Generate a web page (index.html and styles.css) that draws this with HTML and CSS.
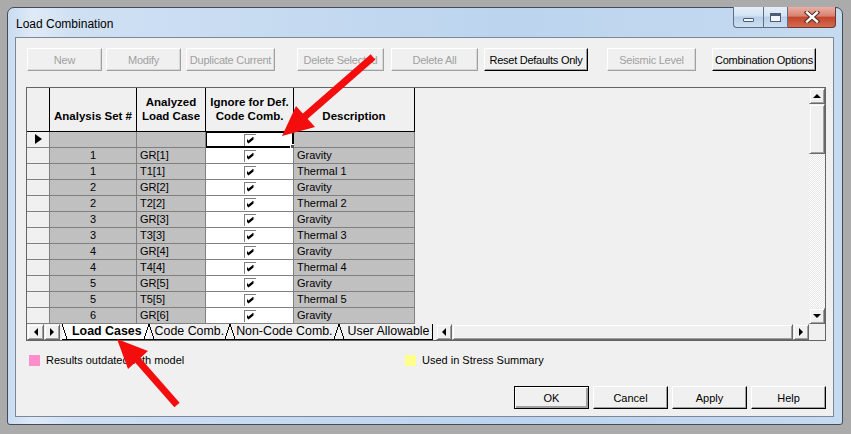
FILE: index.html
```html
<!DOCTYPE html>
<html lang="en">
<head>
    <meta charset="UTF-8">
    <title>Load Combination</title>
    <link rel="stylesheet" href="styles.css">
</head>
<body>
    <div class="window">
        <div class="titlebar">
            <span class="title">Load Combination</span>
            <div class="caps">
                <span class="cap cap-min"><i></i></span>
                <span class="cap cap-max"><i></i></span>
                <span class="cap cap-close">
                    <svg width="16" height="12" viewBox="0 0 16 12">
                        <path d="M3 1.5 L13 10.5 M13 1.5 L3 10.5" stroke="#4a2b26" stroke-width="4.4" stroke-linecap="square"/>
                        <path d="M3 1.5 L13 10.5 M13 1.5 L3 10.5" stroke="#fff" stroke-width="2.4" stroke-linecap="square"/>
                    </svg>
                </span>
            </div>
        </div>

        <div class="client">
            <div class="toolbar">
                <button class="btn b-new" disabled>New</button>
                <button class="btn b-modify" disabled>Modify</button>
                <button class="btn b-dup" disabled>Duplicate Current</button>
                <button class="btn b-delsel" disabled>Delete Selected</button>
                <button class="btn b-delall" disabled>Delete All</button>
                <button class="btn b-reset">Reset Defaults Only</button>
                <button class="btn b-seismic" disabled>Seismic Level</button>
                <button class="btn b-combo">Combination Options</button>
            </div>

            <div class="grid">
                <div class="grid-main">
                    <div class="sheet">
                        <div class="row head">
                            <div class="cell c0"></div>
                            <div class="cell c1">Analysis Set #</div>
                            <div class="cell c2">Analyzed<br>Load Case</div>
                            <div class="cell c3">Ignore for Def.<br>Code Comb.</div>
                            <div class="cell c4">Description</div>
                        </div>
                        <div class="row">
                            <div class="cell c0"><span class="cur"></span></div>
                            <div class="cell c1"></div>
                            <div class="cell c2"></div>
                            <div class="cell c3 focus"><span class="chk"></span></div>
                            <div class="cell c4"></div>
                        </div>
                        <div class="row">
                            <div class="cell c0"></div>
                            <div class="cell c1">1</div>
                            <div class="cell c2">GR[1]</div>
                            <div class="cell c3"><span class="chk"></span></div>
                            <div class="cell c4">Gravity</div>
                        </div>
                        <div class="row">
                            <div class="cell c0"></div>
                            <div class="cell c1">1</div>
                            <div class="cell c2">T1[1]</div>
                            <div class="cell c3"><span class="chk"></span></div>
                            <div class="cell c4">Thermal 1</div>
                        </div>
                        <div class="row">
                            <div class="cell c0"></div>
                            <div class="cell c1">2</div>
                            <div class="cell c2">GR[2]</div>
                            <div class="cell c3"><span class="chk"></span></div>
                            <div class="cell c4">Gravity</div>
                        </div>
                        <div class="row">
                            <div class="cell c0"></div>
                            <div class="cell c1">2</div>
                            <div class="cell c2">T2[2]</div>
                            <div class="cell c3"><span class="chk"></span></div>
                            <div class="cell c4">Thermal 2</div>
                        </div>
                        <div class="row">
                            <div class="cell c0"></div>
                            <div class="cell c1">3</div>
                            <div class="cell c2">GR[3]</div>
                            <div class="cell c3"><span class="chk"></span></div>
                            <div class="cell c4">Gravity</div>
                        </div>
                        <div class="row">
                            <div class="cell c0"></div>
                            <div class="cell c1">3</div>
                            <div class="cell c2">T3[3]</div>
                            <div class="cell c3"><span class="chk"></span></div>
                            <div class="cell c4">Thermal 3</div>
                        </div>
                        <div class="row">
                            <div class="cell c0"></div>
                            <div class="cell c1">4</div>
                            <div class="cell c2">GR[4]</div>
                            <div class="cell c3"><span class="chk"></span></div>
                            <div class="cell c4">Gravity</div>
                        </div>
                        <div class="row">
                            <div class="cell c0"></div>
                            <div class="cell c1">4</div>
                            <div class="cell c2">T4[4]</div>
                            <div class="cell c3"><span class="chk"></span></div>
                            <div class="cell c4">Thermal 4</div>
                        </div>
                        <div class="row">
                            <div class="cell c0"></div>
                            <div class="cell c1">5</div>
                            <div class="cell c2">GR[5]</div>
                            <div class="cell c3"><span class="chk"></span></div>
                            <div class="cell c4">Gravity</div>
                        </div>
                        <div class="row">
                            <div class="cell c0"></div>
                            <div class="cell c1">5</div>
                            <div class="cell c2">T5[5]</div>
                            <div class="cell c3"><span class="chk"></span></div>
                            <div class="cell c4">Thermal 5</div>
                        </div>
                        <div class="row">
                            <div class="cell c0"></div>
                            <div class="cell c1">6</div>
                            <div class="cell c2">GR[6]</div>
                            <div class="cell c3"><span class="chk"></span></div>
                            <div class="cell c4">Gravity</div>
                        </div>
                    </div>
                    <div class="vscroll">
                        <span class="sb-btn"><i class="tri up"></i></span>
                        <span class="sb-thumb"></span>
                        <span class="sb-track"></span>
                        <span class="sb-btn"><i class="tri down"></i></span>
                    </div>
                </div>

                <div class="tabbar">
                    <span class="nav-btn"><i class="tri left"></i></span>
                    <span class="nav-btn"><i class="tri right"></i></span>
                    <div class="tabs">
                        <span class="tab active">Load Cases</span>
                        <span class="tab">Code Comb.</span>
                        <span class="tab">Non-Code Comb.</span>
                        <span class="tab last">User Allowable</span>
                    </div>
                    <div class="hscroll">
                        <span class="sb-btn"><i class="tri left"></i></span>
                        <span class="sb-thumb"></span>
                        <span class="sb-btn"><i class="tri right"></i></span>
                    </div>
                    <span class="corner"></span>
                </div>
            </div>

            <div class="legend">
                <div class="legend-item first"><span class="swatch pink"></span>Results outdated with model</div>
                <div class="legend-item"><span class="swatch yellow"></span>Used in Stress Summary</div>
            </div>

            <div class="actions">
                <button class="btn b-act default">OK</button>
                <button class="btn b-act">Cancel</button>
                <button class="btn b-act">Apply</button>
                <button class="btn b-act">Help</button>
            </div>
        </div>
    </div>

    <svg class="arrows" width="851" height="434" viewBox="0 0 851 434">
        <g fill="#f30d0d" stroke="#f30d0d">
            <line x1="373" y1="57" x2="302" y2="119" stroke-width="7"/>
            <polygon points="282,136 296,106 315,127" stroke="none"/>
            <line x1="177" y1="405" x2="134" y2="356" stroke-width="7"/>
            <polygon points="117,339 148,351 128,369" stroke="none"/>
        </g>
    </svg>
</body>
</html>
```

FILE: styles.css
```css
* {
    box-sizing: border-box;
    margin: 0;
    padding: 0;
}

body {
    width: 851px;
    height: 434px;
    background: #ababab;
    padding: 7px 8px 9px 7px;
    font-family: "Liberation Sans", Arial, sans-serif;
    font-size: 11px;
    color: #000;
    position: relative;
    overflow: hidden;
}

/* window frame */
.window {
    height: 418px;
    border: 1px solid #434d5a;
    border-radius: 7px 7px 3px 3px;
    background: linear-gradient(90deg, #c9dcf1 0%, #dfeaf7 3%, #cfe0f3 8%, #bcd4ee 60%, #c6daf0 100%);
    display: flex;
    flex-direction: column;
    padding: 0 8px 7px 7px;
}

.titlebar {
    height: 29px;
    display: flex;
    align-items: flex-start;
}

.title {
    font-size: 12px;
    line-height: 14px;
    padding: 9px 0 0 1px;
}

.caps {
    display: flex;
    margin: -1px -2px 0 auto;
}

.cap {
    height: 21px;
    display: flex;
    align-items: center;
    justify-content: center;
    border: 1px solid #5b6f88;
    border-top: none;
    background: linear-gradient(#e6eff9, #d3e2f3 45%, #b9cfe8 50%, #cddff2 100%);
}

.cap-min {
    width: 30px;
    border-right: none;
    border-radius: 0 0 0 4px;
}

.cap-min i {
    width: 11px;
    height: 4px;
    margin-top: 6px;
    border: 1px solid #4d5d73;
    background: #f3f7fb;
    border-radius: 1px;
}

.cap-max {
    width: 25px;
}

.cap-max i {
    width: 11px;
    height: 9px;
    border: 1px solid #4d5d73;
    border-top-width: 3px;
    background: #f3f7fb;
}

.cap-close {
    width: 48px;
    border-left: none;
    border-color: #6a3a33;
    border-radius: 0 0 4px 0;
    background: linear-gradient(#eab1a5, #d9806d 45%, #c5462e 52%, #d46a4d 100%);
}

/* client area */
.client {
    flex: 1;
    background: #f0f0f0;
    border: 1px solid #7c889a;
    display: flex;
    flex-direction: column;
}

.toolbar {
    display: flex;
    padding: 10px 0 0 11px;
}

.btn {
    height: 23px;
    font-family: "Liberation Sans", Arial, sans-serif;
    font-size: 11px;
    letter-spacing: -0.25px;
    white-space: nowrap;
    overflow: hidden;
    color: #000;
    background: #f0f0f0;
    border: 1px solid;
    border-color: #fff #000 #000 #fff;
    box-shadow: inset -1px -1px 0 #a0a0a0;
}

.btn:disabled {
    color: #a0a0a0;
    border-color: #fff #a0a0a0 #a0a0a0 #fff;
    box-shadow: inset -1px -1px 0 #d8d8d8;
}

.b-new { width: 75px; }
.b-modify { width: 75px; margin-left: 4px; }
.b-dup { width: 89px; margin-left: 5px; }
.b-delsel { width: 87px; margin-left: 22px; }
.b-delall { width: 87px; margin-left: 7px; }
.b-reset { width: 104px; margin-left: 6px; }
.b-seismic { width: 89px; margin-left: 19px; }
.b-combo { width: 104px; margin-left: 16px; }

/* spreadsheet */
.grid {
    margin: 16px 0 0 10px;
    width: 800px;
    height: 254px;
    border: 1px solid #646464;
    display: flex;
    flex-direction: column;
    background: #f0f0f0;
}

.grid-main {
    display: flex;
    height: 236px;
}

.sheet {
    flex: 1;
    overflow: hidden;
}

.row {
    display: flex;
    height: 16px;
}

.row.head {
    height: 44px;
}

.cell {
    border-right: 1px solid #808080;
    border-bottom: 1px solid #808080;
    background: #c0c0c0;
    line-height: 15px;
    white-space: nowrap;
    overflow: hidden;
    position: relative;
}

.c0 { width: 23px; background: #f0f0f0; }
.c1 { width: 87px; text-align: center; }
.c2 { width: 69px; padding-left: 3px; }
.c3 { width: 88px; background: #fff; display: flex; align-items: center; justify-content: center; }
.c4 { width: 121px; padding-left: 3px; }

.head .cell {
    background: #f0f0f0;
    border-color: #000;
    font-size: 11.5px;
    font-weight: bold;
    text-align: center;
    line-height: 14px;
    display: flex;
    align-items: flex-end;
    justify-content: center;
    padding: 0 0 8px;
}

.cur {
    position: absolute;
    left: 8px;
    top: 2px;
    border-left: 7px solid #000;
    border-top: 5px solid transparent;
    border-bottom: 5px solid transparent;
}

.chk {
    width: 12px;
    height: 12px;
    background: #fff;
    border-top: 1px solid #808080;
    border-left: 1px solid #808080;
    position: relative;
}

.chk::after {
    content: '';
    position: absolute;
    left: 2px;
    top: 2px;
    width: 7px;
    height: 7px;
    background: #000;
    clip-path: polygon(0 29%, 29% 57%, 100% 0, 100% 43%, 29% 100%, 0 71%);
}

.focus {
    border-color: #000;
    box-shadow: inset 1px 1px 0 #000, inset -1px -1px 0 #000;
    overflow: visible;
}

.focus::after {
    content: '';
    position: absolute;
    right: -3px;
    bottom: -3px;
    width: 4px;
    height: 4px;
    background: #555;
    border: 1px solid #fff;
}

/* scrollbars */
.vscroll {
    width: 16px;
    display: flex;
    flex-direction: column;
}

.sb-btn,
.sb-thumb,
.nav-btn,
.corner {
    background: #f0f0f0;
    border: 1px solid;
    border-color: #f0f0f0 #696969 #696969 #f0f0f0;
    box-shadow: inset 1px 1px 0 #fff, inset -1px -1px 0 #a0a0a0;
    display: flex;
    align-items: center;
    justify-content: center;
}

.vscroll .sb-btn {
    height: 16px;
}

.vscroll .sb-thumb {
    height: 50px;
}

.sb-track {
    flex: 1;
    background: repeating-conic-gradient(#fff 0 25%, #e6e6e6 0 50%) 0 0 / 2px 2px;
}

.tri {
    width: 0;
    height: 0;
}

.tri.up {
    border-left: 4px solid transparent;
    border-right: 4px solid transparent;
    border-bottom: 4px solid #000;
}

.tri.down {
    border-left: 4px solid transparent;
    border-right: 4px solid transparent;
    border-top: 4px solid #000;
}

.tri.left {
    border-top: 4px solid transparent;
    border-bottom: 4px solid transparent;
    border-right: 4px solid #000;
}

.tri.right {
    border-top: 4px solid transparent;
    border-bottom: 4px solid transparent;
    border-left: 4px solid #000;
}

/* sheet tabs */
.tabbar {
    height: 16px;
    display: flex;
}

.nav-btn {
    width: 17px;
}

.nav-btn + .nav-btn {
    width: 16px;
}

.tabs {
    display: flex;
    margin-left: 2px;
    border-bottom: 1px solid #000;
}

.tab {
    position: relative;
    font-size: 12.4px;
    line-height: 15px;
    padding: 0 6px 0 6px;
    white-space: nowrap;
}

.tab::before,
.tab::after {
    content: '';
    position: absolute;
    top: 0;
    width: 5px;
    height: 100%;
}

.tab::before {
    left: 0;
    background: linear-gradient(to top right, transparent calc(50% - 0.6px), #000 calc(50% - 0.6px), #000 calc(50% + 0.6px), transparent calc(50% + 0.6px));
}

.tab::after {
    right: 0;
    background: linear-gradient(to bottom right, transparent calc(50% - 0.6px), #000 calc(50% - 0.6px), #000 calc(50% + 0.6px), transparent calc(50% + 0.6px));
}

.tab.active {
    font-weight: bold;
    background: #fff;
    padding: 0 7px 0 10px;
}

.tab.last {
    padding: 0 2px 0 9px;
    border-right: 1px solid #000;
}

.tab.last::after {
    display: none;
}

.hscroll {
    flex: 1;
    display: flex;
    margin-left: 3px;
}

.hscroll .sb-btn {
    width: 16px;
}

.hscroll .sb-thumb {
    flex: 1;
}

.corner {
    width: 16px;
    box-shadow: none;
    border-color: #f0f0f0;
}

/* legend */
.legend {
    display: flex;
    padding: 13px 0 0 13px;
    line-height: 13px;
}

.legend-item {
    display: flex;
    align-items: center;
    gap: 6px;
}

.legend-item.first {
    width: 376px;
}

.swatch {
    width: 11px;
    height: 11px;
}

.pink { background: #ff8ccb; }
.yellow { background: #ffff8c; }

/* dialog buttons */
.actions {
    margin-top: auto;
    display: flex;
    justify-content: flex-end;
    gap: 4px;
    padding: 0 7px 7px 0;
}

.b-act {
    width: 75px;
    letter-spacing: 0;
}

.btn.default {
    border-color: #000;
    box-shadow: inset 1px 1px 0 #fff, inset -2px -2px 0 #a0a0a0;
}

/* red callout arrows drawn over the dialog */
.arrows {
    position: absolute;
    top: 0;
    left: 0;
    pointer-events: none;
}
```
